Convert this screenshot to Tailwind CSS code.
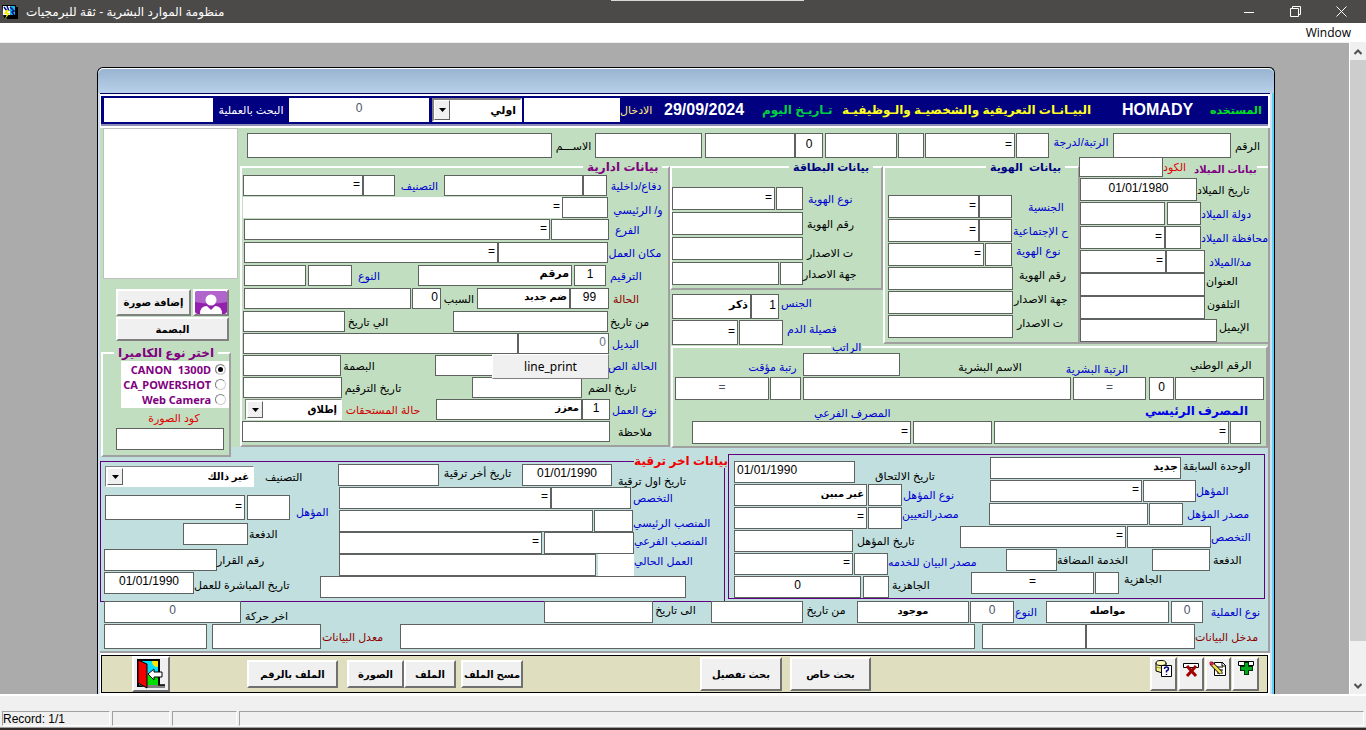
<!DOCTYPE html>
<html lang="ar">
<head>
<meta charset="utf-8">
<title>منظومة الموارد البشرية - ثقة للبرمجيات</title>
<script src="https://cdn.jsdelivr.net/npm/@tailwindcss/browser@4"></script>
</head>
<body class="flex h-screen flex-col overflow-hidden bg-[#ababab] font-['Liberation_Sans','DejaVu_Sans',sans-serif] text-black">

<!-- Application title bar -->
<header class="relative flex h-[23px] shrink-0 items-center bg-[#4b4a48] text-white">
  <div class="absolute top-0 left-[611px] h-px w-[193px] bg-[#d8d8d8]"></div>
  <svg class="ml-[2px] h-4 w-4" viewBox="0 0 16 16" aria-hidden="true"><path d="M0 1h14v13H2z" fill="#000"/><path d="M1 2h12v9H1z" fill="#fff"/><path d="M8 2h5v9H8z" fill="#19b5e8"/><path d="M8 3l4 4-2 1 2 3M2 3l3 4M5 2l2 5" stroke="#00108a" stroke-width="1.5" fill="none"/><path d="M4 6L2 10h3l-2 5 5-6H5l2-3z" fill="#f4ee00"/><path d="M5 14h10V3" stroke="#000" stroke-width="2" fill="none"/></svg>
  <h1 dir="rtl" class="ml-2 text-[12px]">منظومة الموارد البشرية - ثقة للبرمجيات</h1>
  <div class="ml-auto flex items-center gap-[30px] pr-[17px]">
    <button type="button" aria-label="Minimize" class="flex h-4 w-4 items-center justify-center"><svg width="10" height="10"><path d="M0 5.500h10" stroke="#fff"/></svg></button>
    <button type="button" aria-label="Restore" class="flex h-4 w-4 items-center justify-center"><svg width="11" height="11" fill="none" stroke="#fff"><path d="M.5 2.500h8v8h-8zM2.500 2.500v-2h8v8h-2"/></svg></button>
    <button type="button" aria-label="Close" class="flex h-4 w-4 items-center justify-center"><svg width="11" height="11" stroke="#fff"><path d="M.5.5l10 10M10.500.5l-10 10"/></svg></button>
  </div>
</header>
<nav class="flex h-5 shrink-0 items-center justify-end border-b border-[#f0f0f0] bg-white pr-[15px] font-['Open_Sans',sans-serif] text-[12px]"><button type="button">Window</button></nav>

<div class="flex min-h-0 flex-1">
<main class="min-w-0 flex-1 overflow-hidden pt-6 pr-[74px] pl-[97px]">
<div class="flex flex-col rounded-t-md border border-b-0 border-black bg-[#cfe0f3] shadow-[inset_-2px_0_0_#5fd0f5]">
  <div class="h-[25px] rounded-t-md border-t border-white bg-linear-to-b from-[#99b4d1] to-[#b9d1ea]"></div>
  <form class="mr-1 ml-[2px] border-t border-[#000060] bg-white pt-[2px]
    [&_input:not([type])]:h-full [&_input:not([type])]:shrink-0 [&_input:not([type])]:border [&_input:not([type])]:border-[#5f6360] [&_input:not([type])]:bg-white [&_input:not([type])]:px-[2px] [&_input:not([type])]:pb-1 [&_input:not([type])]:text-right [&_input:not([type])]:text-[12px]
    [&_label]:shrink-0 [&_label]:self-center [&_label]:text-center [&_label]:text-[11px] [&_label]:leading-3 [&_label]:whitespace-nowrap
    [&_fieldset]:min-w-0 [&_legend]:whitespace-nowrap">

    <!-- Search bar -->
    <div class="mr-[2px] ml-px flex h-[30px] items-center border-b-2 border-[#8f8fb8] bg-[#000080] py-[2px] text-white">
      <input aria-label="بحث" class="ml-[3px] w-[109px] border-0! text-black">
      <label for="h1" class="w-[76px]">البحث بالعملية</label>
      <input id="h1" value="0" class="w-[140px] border-0! text-center! text-gray-600">
      <div class="relative ml-[3px] h-6 w-[90px] shrink-0">
        <select aria-label="نوع الادخال" dir="rtl" class="block h-full w-full appearance-none border-2 border-t-[#808080] border-r-white border-b-white border-l-[#808080] bg-white px-1 text-[11px] font-bold text-black"><option>اولي</option></select>
        <span class="pointer-events-none absolute top-[2px] bottom-[2px] left-[2px] flex w-4 items-center justify-center border border-t-white border-r-[#606060] border-b-[#606060] border-l-white bg-[#f0f0f0]"><svg width="7" height="4"><path d="M0 0h7L3.500 4z"/></svg></span>
      </div>
      <input id="h2" class="ml-[2px] w-24 border-0! text-black">
      <label for="h2" class="w-[32px] text-[#ffe680]">الادخال</label>
      <time class="ml-3 w-[82px] shrink-0 text-[16px] font-bold">29/09/2024</time>
      <span class="ml-4 w-[68px] shrink-0 text-center text-[12px] font-bold whitespace-nowrap text-[#00d040]">تـاريـخ اليوم</span>
      <h2 class="ml-2 min-w-0 flex-1 text-center text-[12px] font-bold whitespace-nowrap text-[#ffff20]">البيـانـات التعريفية والشخصيـة والـوظيفيـة</h2>
      <span class="ml-[27px] w-[88px] shrink-0 text-[16px] font-bold">HOMADY</span>
      <span class="w-[58px] shrink-0 pr-2 text-right text-[11px] font-bold whitespace-nowrap text-[#00e020]">المستخده</span>
    </div>

    <!-- Upper section -->
    <div class="mt-[2px] flex h-[319px] border-r-2 border-[#a0a0a0] bg-[#c1dfc0]">
      <!-- Photo and camera column -->
      <div class="-mb-[10px] flex w-[138px] shrink-0 flex-col">
        <div role="img" aria-label="الصورة" class="ml-[3px] h-[151px] border border-[#c0c0c0] bg-white"></div>
        <div class="mt-[10px] ml-4 flex h-[27px] gap-[2px] pr-[9px]">
          <button type="button" class="flex-1 border-2 border-t-white border-r-[#808080] border-b-[#808080] border-l-white bg-[#f0f0f0] text-[10px] font-bold">إضافة صورة</button>
          <button type="button" aria-label="ملف شخصي" class="w-9 border-2 border-t-white border-r-[#808080] border-b-[#808080] border-l-white bg-white"><svg viewBox="0 0 32 23" class="h-full w-full" preserveAspectRatio="none"><rect width="32" height="23" rx="3" fill="#9420b0"/><path d="M0 3q0-3 3-3h26q3 0 3 3v8q-16 3-32 0z" fill="#b165cc"/><circle cx="16" cy="9" r="5.500" fill="#fff"/><path d="M5 23q0-8 7-8l4 4 4-4q7 0 7 8z" fill="#fff"/></svg></button>
        </div>
        <button type="button" class="mt-px mr-[9px] ml-4 h-6 border-2 border-t-white border-r-[#808080] border-b-[#808080] border-l-white bg-[#f0f0f0] text-[10px] font-bold">البصمة</button>
        <fieldset class="mt-1 mr-[7px] ml-px h-[112px] border-2 border-t-white border-r-[#a0a0a0] border-b-[#a0a0a0] border-l-white bg-[#c1dfc0]">
          <legend class="mx-auto h-4 px-1 text-[12px] leading-4 font-bold text-[#800080]">اختر نوع الكاميرا</legend>
          <div class="ml-[18px] flex flex-col bg-white py-px pr-[3px] font-['Noto_Sans',sans-serif] font-bold text-[#800080] [&_input]:m-0 [&_input]:h-[11px] [&_input]:w-[11px] [&_input]:appearance-none [&_input]:rounded-full [&_input]:border [&_input]:border-[#808080] [&_input]:border-r-[#d0d0d0] [&_input]:border-b-[#d0d0d0] [&_input]:bg-white [&_label]:flex [&_label]:h-[15px] [&_label]:items-center [&_label]:gap-1 [&_label]:self-end">
            <label>CANON&nbsp; 1300D <input type="radio" name="cam" checked class="checked:shadow-[inset_0_0_0_2px_#fff,inset_0_0_0_9px_#000]"></label>
            <label>CA_POWERSHOT <input type="radio" name="cam"></label>
            <label>Web Camera <input type="radio" name="cam"></label>
          </div>
          <div class="flex flex-col items-center">
            <label for="cam4" class="mt-1 ml-4 text-[#e00000]">كود الصورة</label>
            <div class="mt-1 ml-2 flex h-[22px]"><input id="cam4" class="w-[108px]"></div>
          </div>
        </fieldset>
      </div>

      <div class="flex min-w-0 flex-1 flex-col">
        <!-- Number / rank / name -->
        <div class="mt-[5px] ml-[9px] flex h-[25px] shrink-0">
          <input id="n1" class="w-[305px]"><label for="n1" class="w-[43px]">الاســـم</label>
          <input aria-label="الاسم 2" class="w-[107px]"><input aria-label="الاسم 3" class="ml-[3px] w-[90px]"><input aria-label="رمز" value="0" class="w-7 text-center!">
          <input aria-label="الاسم 4" class="ml-[2px] w-[72px]"><input aria-label="الاسم 5" class="ml-px w-[26px]"><input aria-label="وصف الرتبة" value="=" class="ml-px w-[90px]">
          <input id="n2" class="ml-px w-[33px]"><label for="n2" class="w-16 pb-2 text-[#0000d0]">الرتبة/لدرجة</label>
          <input id="n3" class="w-[118px]"><label for="n3" class="ml-1">الرقم</label>
        </div>

        <div class="flex min-h-0 flex-1">
          <!-- Administrative data -->
          <fieldset class="mt-[2px] ml-[2px] w-[430px] shrink-0 border-2 border-t-white border-r-[#a0a0a0] border-b-[#a0a0a0] border-l-white">
            <legend class="ml-[341px] h-[14px] px-1 text-[12px] leading-[14px] font-bold text-[#800080]">بيانات ادارية</legend>
            <div class="mt-px flex flex-col gap-px [&>div]:flex [&>div]:h-[21px]">
              <div><input aria-label="وصف التصنيف" value="=" class="ml-px w-[120px]"><input id="a1" class="w-8"><label for="a1" class="w-[49px] text-[#0000d0]">التصنيف</label><input aria-label="وصف دفاع/داخلية" class="w-[139px]"><input id="a2" class="w-6"><label for="a2" class="w-[58px] text-[#0000d0]">دفاع/داخلية</label></div>
              <div><input aria-label="وصف و/ الرئيسي" value="=" class="ml-px w-[319px] border-0!"><input id="a3" class="w-[46px]"><label for="a3" class="w-[60px] pt-1 text-[#0000d0]">و/ الرئيسي</label></div>
              <div><input aria-label="وصف الفرع" value="=" class="ml-[2px] w-[306px]"><input id="a4" class="ml-px w-[58px]"><label for="a4" class="ml-[6px] text-[#0000d0]">الفرع</label></div>
            </div>
            <div class="mt-[2px] flex flex-col gap-[2px] [&>div]:flex [&>div]:h-[21px]">
              <div><input aria-label="وصف مكان العمل" value="=" class="ml-[2px] w-[254px]"><input id="a5" class="w-[110px]"><label for="a5" class="w-[54px] text-[#0000d0]">مكان العمل</label></div>
              <div><input aria-label="وصف النوع" class="ml-[2px] w-[62px]"><input id="a6" class="ml-[2px] w-11"><label for="a6" class="w-[66px] pr-8 text-[#0000d0]">النوع</label><input aria-label="وصف الترقيم" value="مرقم" class="w-[154px] text-[11px]! font-bold"><input id="a7" value="1" class="ml-[2px] w-8 text-center!"><label for="a7" class="ml-1 text-[#0000d0]">الترقيم</label></div>
              <div><input aria-label="وصف السبب" class="ml-[2px] w-[167px]"><input id="a8" value="0" class="ml-px w-[29px]"><label for="a8" class="w-[36px]">السبب</label><input aria-label="وصف الحالة" value="ضم جديد" class="w-[93px] text-[10px]! font-bold"><input id="a9" value="99" class="w-[39px] text-center!"><label for="a9" class="ml-1 text-[#900000]">الحالة</label></div>
            </div>
            <div class="mt-[2px] flex flex-col gap-px [&>div]:flex [&>div]:h-[21px]">
              <div><input id="a10" class="ml-px w-[102px]"><label for="a10" class="w-[108px] pr-[62px]">الي تاريخ</label><input id="a11" class="w-[155px]"><label for="a11" class="ml-[2px]">من تاريخ</label></div>
              <div><input aria-label="وصف البديل" class="ml-px w-[275px]"><input id="a12" value="0" class="w-[91px] text-gray-500"><label for="a12" class="ml-[3px] text-[#0000d0]">البديل</label></div>
              <div class="relative"><input id="a13" class="ml-px w-[98px]"><label for="a13" class="w-[94px] pr-[58px]">البصمة</label><input id="a14" class="w-[173px]"><label for="a14" class="text-[#0000d0]">الحالة الص</label>
                <button type="button" class="absolute -top-px left-[250px] z-10 h-[25px] w-[117px] border border-t-white border-r-[#808080] border-b-[#808080] border-l-white bg-[#f0f0f0] font-['Noto_Sans',sans-serif] text-[12px]">line_print</button></div>
              <div><input id="a15" class="ml-px w-[99px]"><label for="a15" class="w-[130px] pr-[68px]">تاريخ الترقيم</label><input id="a16" class="w-[110px]"><label for="a16" class="ml-[6px]">تاريخ الضم</label></div>
              <div>
                <div class="relative ml-[3px] w-[97px]">
                  <select id="a17" dir="rtl" class="block h-full w-full appearance-none border border-t-[#808080] border-r-white border-b-white border-l-[#808080] bg-white px-1 text-[10px] font-bold"><option>إطلاق</option></select>
                  <span class="pointer-events-none absolute top-[2px] bottom-[2px] left-[2px] flex w-4 items-center justify-center border border-t-white border-r-[#606060] border-b-[#606060] border-l-white bg-[#f0f0f0]"><svg width="7" height="4"><path d="M0 0h7L3.500 4z"/></svg></span>
                </div>
                <label for="a17" class="w-[94px] pr-3 text-[#d00000]">حالة المستحقات</label><input aria-label="وصف نوع العمل" value="معزز" class="w-[146px] text-[10px]! font-bold"><input id="a18" value="1" class="w-7 text-center!"><label for="a18" class="ml-[2px] text-[#0000d0]">نوع العمل</label></div>
              <div><input id="a19" class="w-[368px]"><label for="a19" class="ml-2">ملاحظة</label></div>
            </div>
          </fieldset>

          <div class="flex min-w-0 flex-1 flex-col">
            <div class="flex h-[186px] shrink-0">
              <!-- Card data, gender and blood group -->
              <div class="w-[213px] shrink-0">
                <fieldset class="mt-[2px] h-[130px] border-2 border-t-white border-r-[#a0a0a0] border-b-[#a0a0a0] border-l-white">
                  <legend class="ml-[117px] h-[14px] px-1 text-[11px] leading-[14px] font-bold text-[#000080]">بيانات البطاقة</legend>
                  <div class="mt-[13px] flex flex-col gap-[2px] [&>div]:flex [&>div]:h-[23px]">
                    <div><input aria-label="وصف نوع الهوية" value="=" class="w-[103px]"><input id="c1" class="ml-px w-[27px]"><label for="c1" class="ml-[5px] text-[#0000d0]">نوع الهوية</label></div>
                    <div><input id="c2" class="w-[131px]"><label for="c2" class="ml-1">رقم الهوية</label></div>
                    <div><input id="c3" class="w-[131px]"><label for="c3" class="ml-1 pt-2">ت الاصدار</label></div>
                    <div><input aria-label="وصف جهة الاصدار" class="w-[107px]"><input id="c4" class="ml-px w-[23px]"><label for="c4">جهة الاصدار</label></div>
                  </div>
                </fieldset>
                <div class="mt-1 ml-[2px] flex flex-col gap-px [&>div]:flex [&>div]:h-[25px]">
                  <div><input aria-label="وصف الجنس" value="ذكر" class="w-[79px] text-[11px]! font-bold"><input id="c5" value="1" class="w-7"><label for="c5" class="ml-[2px] pb-2 text-[#0000d0]">الجنس</label></div>
                  <div><input aria-label="وصف فصيلة الدم" value="=" class="w-[66px]"><input id="c6" class="ml-px w-11"><label for="c6" class="ml-1 pb-2 text-[#0000d0]">فصيلة الدم</label></div>
                </div>
              </div>
              <!-- Identity data -->
              <fieldset class="mt-[2px] w-[195px] shrink-0 border-2 border-r-0 border-t-white border-b-[#a0a0a0] border-l-white">
                <legend class="ml-[101px] h-[14px] px-1 text-[11px] leading-[14px] font-bold text-[#000080]">بيانات&nbsp; الهوية</legend>
                <div class="mt-[21px] ml-[3px] flex flex-col gap-px [&>div]:flex [&>div]:h-[23px]">
                  <div><input aria-label="وصف الجنسية" value="=" class="w-[91px]"><input id="i1" class="w-[33px]"><label for="i1" class="ml-4 text-[#0000d0]">الجنسية</label></div>
                  <div><input aria-label="وصف ح الاجتماعية" value="=" class="w-[91px]"><input id="i2" class="w-[33px]"><label for="i2" class="ml-px text-[#0000d0]">ح الإجتماعية</label></div>
                  <div><input aria-label="وصف نوع الهوية" value="=" class="w-24"><input id="i3" class="ml-px w-[27px]"><label for="i3" class="ml-1 pb-2 text-[#0000d0]">نوع الهوية</label></div>
                  <div><input id="i4" class="w-[125px]"><label for="i4" class="ml-[6px] pb-2">رقم الهوية</label></div>
                  <div><input id="i5" class="w-[125px]"><label for="i5" class="ml-px pb-2">جهة الاصدار</label></div>
                  <div><input id="i6" class="w-[125px]"><label for="i6" class="ml-1 pb-2">ت الاصدار</label></div>
                </div>
              </fieldset>
              <!-- Birth data -->
              <fieldset class="-mt-px min-w-0 flex-1 border-2 border-r-0 border-t-white border-b-[#a0a0a0] border-l-[#a0a0a0]">
                <legend class="-ml-px flex h-5 items-center"><span class="flex h-5"><input id="b1" class="w-[84px]"></span><label for="b1" class="text-[#e00000]">الكود</label><span class="ml-2 pt-1 text-[10px] font-bold text-[#800080]">بيانات الميلاد</span></legend>
                <div class="mt-px flex flex-col gap-px [&>div]:flex [&>div]:h-[23px]">
                  <div><input id="b2" value="01/01/1980" class="w-[117px] text-center!"><label for="b2">تاريخ الميلاد</label></div>
                  <div><input aria-label="وصف دولة الميلاد" class="w-[85px]"><input id="b3" class="ml-[2px] w-[34px]"><label for="b3" class="text-[#0000d0]">دولة الميلاد</label></div>
                  <div><input aria-label="وصف محافظة الميلاد" value="=" class="w-[85px]"><input id="b4" class="w-9"><label for="b4" class="text-[#0000d0]">محافظة الميلاد</label></div>
                  <div><input aria-label="وصف مدينة الميلاد" value="=" class="w-[86px]"><input id="b5" class="w-[39px]"><label for="b5" class="ml-1 text-[#0000d0]">مد/الميلاد</label></div>
                </div>
                <div class="flex flex-col [&>div]:flex [&>div]:h-[23px]">
                  <div><input id="b6" class="w-[125px]"><label for="b6" class="ml-px pb-2">العنوان</label></div>
                  <div><input id="b7" class="w-[125px]"><label for="b7" class="ml-[2px] pb-2">التلفون</label></div>
                  <div><input id="b8" class="w-[137px]"><label for="b8" class="ml-[2px] pb-2">الإيميل</label></div>
                </div>
              </fieldset>
            </div>
            <!-- Payroll and bank -->
            <fieldset class="-mt-[3px] ml-px h-[107px] shrink-0 border-2 border-t-white border-r-[#a0a0a0] border-b-[#a0a0a0] border-l-white">
              <legend class="ml-[158px] h-3 px-px text-[11px] leading-3 text-[#0000d0]">الراتب</legend>
              <div class="flex h-[23px]"><label for="s2" class="ml-[69px] w-[61px] pt-1 text-[#0000d0]">رتبة مؤقت</label><input aria-label="الراتب" class="w-[97px]"><label for="s3" class="w-[180px] pt-1">الاسم البشرية</label><label for="s4" class="-ml-4 w-[66px] pt-2 text-[#0000d0]">الرتبة البشرية</label><label for="s5" class="ml-[60px]">الرقم الوطني</label></div>
              <div class="mt-px ml-[2px] flex h-[23px]"><input aria-label="وصف رتبة مؤقت" value="=" class="w-[94px] text-center! text-gray-600"><input id="s2" class="ml-px w-[31px]"><input id="s3" class="ml-[2px] w-[268px]"><input id="s4" value="=" class="ml-[2px] w-[73px] text-center! text-gray-600"><input aria-label="رمز الرتبة" value="0" class="ml-[3px] w-[25px] text-center!"><input id="s5" class="ml-px w-[89px]"></div>
              <div class="flex h-[21px]"><label for="s6" class="ml-[141px] w-[75px] pt-1 text-[#0000d0]">المصرف الفرعي</label><label for="s7" class="ml-auto pr-[18px] text-[12px]! font-bold text-[#0000e8]">المصرف الرئيسي</label></div>
              <div class="ml-[19px] flex h-[23px]"><input aria-label="وصف المصرف الفرعي" value="=" class="w-[219px]"><input id="s6" class="ml-[2px] w-[79px]"><input aria-label="وصف المصرف الرئيسي" value="=" class="ml-[2px] w-[235px]"><input id="s7" class="ml-px w-[31px]"></div>
            </fieldset>
          </div>
        </div>
      </div>
    </div>

    <!-- Lower section -->
    <div class="h-[206px] border-r-2 border-b-2 border-[#a0a0a0] bg-[#c0dfde]">
      <div class="flex h-[154px]">
        <!-- Last promotion -->
        <fieldset class="mt-[7px] h-[148px] w-[625px] shrink-0 border border-[#600080]">
          <legend class="-mr-1 ml-auto h-[14px] text-[12px] leading-[14px] font-bold text-[#f00000]">بيانات اخر ترقية</legend>
          <div class="-mt-1 flex">
            <div class="w-[219px] shrink-0 pt-[2px] pl-[3px]">
              <div class="flex h-[21px]">
                <div class="relative ml-px w-[149px]">
                  <select id="p1" dir="rtl" class="block h-full w-full appearance-none border border-t-[#808080] border-r-white border-b-white border-l-[#808080] bg-white px-1 text-[10px] font-bold"><option>غير ذالك</option></select>
                  <span class="pointer-events-none absolute top-[2px] bottom-[2px] left-[2px] flex w-4 items-center justify-center border border-t-white border-r-[#606060] border-b-[#606060] border-l-white bg-[#f0f0f0]"><svg width="7" height="4"><path d="M0 0h7L3.500 4z"/></svg></span>
                </div><label for="p1" class="ml-[11px]">التصنيف</label></div>
              <div class="mt-2 flex h-[25px]"><input aria-label="وصف المؤهل" value="=" class="ml-px w-[140px]"><input id="p2" class="ml-[2px] w-[43px]"><label for="p2" class="ml-[6px] pt-2 text-[#0000d0]">المؤهل</label></div>
              <div class="mt-[3px] flex h-[22px]"><input id="p3" class="ml-[79px] w-[65px]"><label for="p3" class="ml-px">الدفعة</label></div>
              <div class="mt-1 flex h-[22px]"><input id="p4" class="w-[113px]"><label for="p4">رقم القرار</label></div>
              <div class="mt-px flex h-[22px]"><input id="p5" value="01/01/1990" class="w-[90px] text-center!"><label for="p5" class="pt-1">تاريخ المباشرة للعمل</label></div>
            </div>
            <div>
              <div class="ml-[18px] flex flex-col gap-px [&>div]:flex [&>div]:h-[22px]">
                <div><input id="q1" class="w-[101px]"><label for="q1" class="w-[83px] pr-[6px] pb-1">تاريخ أخر ترقية</label><input id="q2" value="01/01/1990" class="w-[90px] text-center!"><label for="q2" class="ml-[6px] pt-3">تاريخ اول ترقية</label></div>
                <div><input aria-label="وصف التخصص" value="=" class="ml-px w-[212px]"><input id="q3" class="w-[80px]"><label for="q3" class="ml-[2px] text-[#0000d0]">التخصص</label></div>
                <div><input aria-label="وصف المنصب الرئيسي" class="ml-px w-[254px]"><input id="q4" class="ml-px w-[39px]"><label for="q4" class="pt-1 text-[#0000d0]">المنصب الرئيسي</label></div>
              </div>
              <div class="flex flex-col [&>div]:flex [&>div]:h-[22px]">
                <div><input aria-label="وصف المنصب الفرعي" value="=" class="ml-[19px] w-[203px]"><input id="q5" class="ml-[2px] w-[90px]"><label for="q5" class="pb-1 text-[#0000d0]">المنصب الفرعي</label></div>
                <div><input aria-label="وصف العمل الحالي" class="ml-[19px] w-[257px]"><input id="q6" class="ml-[2px] w-9 border-0!"><label for="q6" class="pb-2 text-[#0000d0]">العمل الحالي</label></div>
                <div><input aria-label="ملاحظات الترقية" class="w-[366px]"></div>
              </div>
            </div>
          </div>
        </fieldset>
        <!-- Enrolment and qualification -->
        <div class="mt-[7px] mr-[3px] ml-[3px] flex h-[145px] flex-1 border border-[#600080]">
          <div class="flex w-[231px] shrink-0 flex-col gap-px pt-[6px] pl-[5px] [&>div]:flex [&>div]:h-[22px]">
            <div><input id="r1" value="01/01/1990" class="w-[121px] text-left!"><label for="r1" class="ml-5 pt-2">تاريخ الالتحاق</label></div>
            <div><input aria-label="وصف نوع المؤهل" value="غير مبين" class="w-[133px] text-[10px]! font-bold"><input id="r2" class="ml-px w-[34px]"><label for="r2" class="ml-px text-[#0000d0]">نوع المؤهل</label></div>
            <div><input aria-label="وصف مصدر التعيين" value="=" class="w-[133px]"><input id="r3" class="ml-px w-[34px]"><label for="r3" class="pb-2 text-[#0000d0]">مصدرالتعيين</label></div>
            <div><input id="r4" class="w-[119px]"><label for="r4" class="ml-1">تاريخ المؤهل</label></div>
            <div><input aria-label="وصف مصدر البيان" value="=" class="w-[119px]"><input id="r5" class="ml-px w-[34px]"><label for="r5" class="pb-1 text-[#0000d0]">مصدر البيان للخدمه</label></div>
            <div><input aria-label="وصف الجاهزية" value="0" class="w-[127px] text-center!"><input id="r6" class="ml-[2px] w-[26px]"><label for="r6" class="ml-[3px] pb-1">الجاهزية</label></div>
          </div>
          <div class="flex flex-col gap-px pt-[2px] [&>div]:flex [&>div]:h-[22px]">
            <div><input id="t1" value="جديد" class="ml-[30px] w-[191px] text-[11px]! font-bold"><label for="t1" class="ml-[2px] pb-1">الوحدة السابقة</label></div>
            <div><input aria-label="وصف المؤهل" value="=" class="ml-[30px] w-[152px]"><input id="t2" class="ml-px w-[53px]"><label for="t2" class="text-[#0000d0]">المؤهل</label></div>
            <div><input aria-label="وصف مصدر المؤهل" class="ml-[29px] w-[159px]"><input id="t3" class="ml-px w-[34px]"><label for="t3" class="ml-1 text-[#0000d0]">مصدر المؤهل</label></div>
            <div><input aria-label="وصف التخصص" value="=" class="w-[166px]"><input id="t4" class="ml-px w-[84px]"><label for="t4" class="text-[#0000d0]">التخصص</label></div>
            <div><input id="t5" class="ml-[46px] w-[51px]"><label for="t5" class="w-[95px] pr-6">الخدمة المضافة</label><input id="t6" class="w-[58px]"><label for="t6" class="ml-[3px]">الدفعة</label></div>
            <div><input aria-label="وصف الجاهزية" value="=" class="ml-[11px] w-[123px] text-center!"><input id="t7" class="ml-px w-6"><label for="t7" class="ml-[5px] pb-2">الجاهزية</label></div>
          </div>
        </div>
      </div>
      <!-- Operation -->
      <div class="ml-1 flex h-[22px]">
        <input id="o1" value="0" class="w-[137px] text-center! text-gray-600"><label for="o1" class="ml-1 flex-1 pt-2 text-left!">اخر حركة</label>
        <input id="o2" class="w-[109px]"><label for="o2" class="w-[58px] pr-[13px] pb-1">الى تاريخ</label>
        <input id="o3" class="w-[92px]"><label for="o3" class="w-[54px] pr-2 pb-1">من تاريخ</label>
        <input aria-label="وصف النوع" value="موجود" class="w-28 text-center! text-[10px]! font-bold"><input id="o4" value="0" class="ml-px w-11 text-center! text-gray-600"><label for="o4" class="w-8 pr-2 text-[#0000d0]">النوع</label>
        <input aria-label="وصف نوع العملية" value="مواصله" class="w-[123px] text-center! text-[10px]! font-bold"><input id="o5" value="0" class="ml-[2px] w-8 text-center! text-gray-600"><label for="o5" class="w-[65px] text-[#0000d0]">نوع العملية</label>
      </div>
      <div class="mt-px ml-1 flex h-[25px]">
        <input aria-label="وصف معدل البيانات" class="w-[103px]"><input id="o6" class="ml-[5px] w-[109px]"><label for="o6" class="w-[79px] pr-4 text-[#900000]">معدل البيانات</label>
        <input aria-label="ملاحظات" class="min-w-0 flex-1"><input aria-label="وصف مدخل البيانات" class="ml-[7px] w-[104px]"><input id="o7" class="w-[109px]"><label for="o7" class="w-[73px] pr-[10px] text-[#900000]">مدخل البيانات</label>
      </div>
    </div>

    <!-- Toolbar -->
    <div class="mt-[2px] mr-[2px] ml-px flex h-[38px] items-center border border-black bg-[#dfdfbf] [&_button]:flex [&_button]:shrink-0 [&_button]:items-center [&_button]:justify-center [&_button]:border-2 [&_button]:border-t-white [&_button]:border-r-[#707070] [&_button]:border-b-[#707070] [&_button]:border-l-white [&_button]:bg-[#f0f0f0] [&_button]:text-[10px] [&_button]:font-bold [&_button]:whitespace-nowrap">
      <button type="button" aria-label="خروج" class="ml-[30px] h-9 w-[38px]"><svg width="28" height="30" viewBox="0 0 28 30"><path d="M1 1h21v26H1z" fill="#00e0ff" stroke="#000" stroke-width="2"/><path d="M15 2h6v6q-6 0-6-6z" fill="#ffe800"/><path d="M9 17q6-6 12-1v10H9z" fill="#00e000"/><path d="M2 26h26v3H10z" fill="#808080"/><path d="M1 1l9 4v24l-9-5z" fill="#f00000" stroke="#000"/><path d="M11 15l6-5v3h8v5h-8v3z" fill="#fff" stroke="#000"/><path d="M22 19v7h6" stroke="#000" fill="none" stroke-width="1.500"/></svg></button>
      <button type="button" class="ml-[77px] h-7 w-[91px]">الملف بالرقم</button>
      <button type="button" class="ml-[9px] h-7 w-[57px]">الصورة</button>
      <button type="button" class="h-7 w-[52px]">الملف</button>
      <button type="button" class="ml-[5px] h-7 w-[62px]">مسح الملف</button>
      <button type="button" class="ml-[177px] h-[34px] w-[82px]">بحث تفصيل</button>
      <button type="button" class="ml-2 h-[34px] w-[81px]">بحث خاص</button>
      <div class="mr-[8px] ml-auto flex gap-px">
        <button type="button" aria-label="استعلام" class="h-[34px] w-[27px] items-start!"><svg width="18" height="20" viewBox="0 0 18 20"><path d="M1 4v8q5 3 10 0V4" fill="#f5f090" stroke="#000"/><ellipse cx="6" cy="4" rx="5" ry="2.500" fill="#ffffc0" stroke="#000"/><path d="M1 8q4 2 8 0" fill="none" stroke="#a09020"/><path d="M6.500 6.500h10v11h-10z" fill="#fff" stroke="#000"/><path d="M9.500 10q0-2 2-2t2 2q0 1-2 2v1.500M11.500 15v1" fill="none" stroke="#000080" stroke-width="1.500"/></svg></button>
        <button type="button" aria-label="حذف" class="h-[34px] w-[26px] items-start!"><svg width="18" height="20" viewBox="0 0 18 20"><path d="M1.500 4.500h15v4h-15z" fill="#fff" stroke="#000"/><path d="M5 7l9 10M14 7L5 17" stroke="#a00000" stroke-width="3"/></svg></button>
        <button type="button" aria-label="تعديل" class="h-[34px] w-[26px] items-start!"><svg width="18" height="20" viewBox="0 0 18 20"><path d="M5.500 3.500h8l3 3v10h-11z" fill="#fff" stroke="#000"/><path d="M13 3v4h4M8 8h6M8 11h6M8 14h6" stroke="#000" fill="none"/><path d="M2 4l10 10" stroke="#000" stroke-width="4"/><path d="M3 5l9 9" stroke="#f0e050" stroke-width="2.500"/><path d="M1 3l3 3" stroke="#d02050" stroke-width="3"/></svg></button>
        <button type="button" aria-label="إضافة" class="h-[34px] w-[27px] items-start!"><svg width="18" height="20" viewBox="0 0 18 20"><path d="M1.500 2.500h15v4h-15z" fill="#fff" stroke="#000"/><path d="M9.500 3v13M3 9.500h13" stroke="#003000" stroke-width="5"/><path d="M9.500 4v11M4 9.500h11" stroke="#00a820" stroke-width="3"/></svg></button>
      </div>
    </div>
    <div class="h-3"></div>
  </form>
</div>
</main>

<!-- Vertical scroll bar -->
<div class="flex w-[17px] shrink-0 flex-col items-center border-l border-white bg-[#f0f0f0]">
  <button type="button" aria-label="Scroll up" class="flex h-[17px] w-full items-center justify-center"><svg width="8" height="6" fill="none" stroke="#505050" stroke-width="2"><path d="M.5 5L4 1.500 7.500 5"/></svg></button>
  <div class="w-full flex-1 bg-[#cdcdcd]"></div>
  <div class="h-9"></div>
  <button type="button" aria-label="Scroll down" class="flex h-[17px] w-full items-center justify-center"><svg width="8" height="6" fill="none" stroke="#505050" stroke-width="2"><path d="M.5 1L4 4.500 7.500 1"/></svg></button>
</div>
</div>

<!-- Status bar -->
<footer class="flex h-9 shrink-0 items-end gap-[2px] border-t-2 border-b-2 border-t-white border-b-[#302a28] bg-[#f0f0f0] px-[2px] pb-[2px] text-[12px] shadow-[inset_0_-1px_0_#a0a0a0] [&>div]:h-[15px] [&>div]:border [&>div]:border-t-[#a0a0a0] [&>div]:border-r-white [&>div]:border-b-white [&>div]:border-l-[#a0a0a0]">
  <div class="w-[108px] leading-[14px] whitespace-nowrap">Record: 1/1</div>
  <div class="w-[58px]"></div>
  <div class="w-[65px]"></div>
  <div class="flex-1"></div>
</footer>
</body>
</html>
